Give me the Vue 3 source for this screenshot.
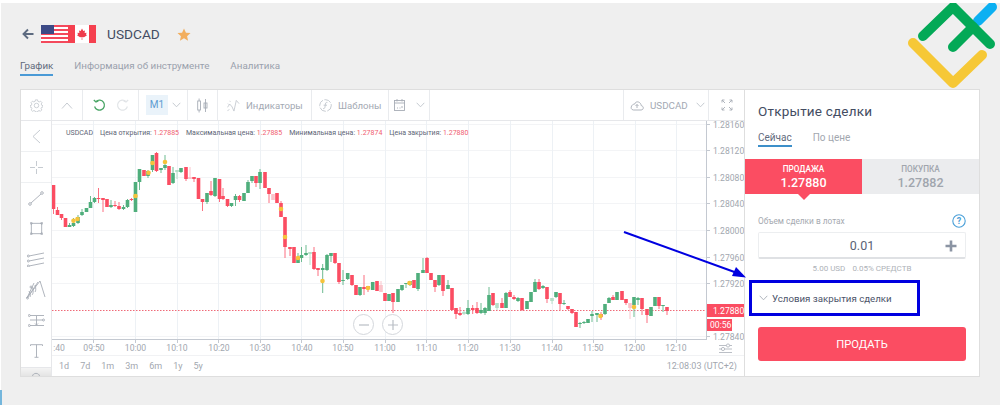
<template>
  <div class="page">
    <div class="edge-mark"></div>

    <div class="head">
      <svg class="back" width="12" height="12" viewBox="0 0 12 12">
        <path d="M11.5 6H1.5M6 1.5L1.5 6L6 10.5" fill="none" stroke="#5d6b80" stroke-width="1.9" />
      </svg>
      <svg class="flags" width="55" height="18" viewBox="0 0 55 18">
        <rect width="28" height="18" fill="#fff" />
        <rect v-for="i in 5" :key="i" y="0" :transform="`translate(0 ${(i - 1) * 4})`" width="28" height="2" fill="#f4495c" />
        <rect y="16" width="28" height="2" fill="#f4495c" />
        <rect width="13" height="9" fill="#3c4a86" />
        <rect x="27" width="7" height="18" fill="#f5404f" />
        <rect x="34" width="14" height="18" fill="#fff" />
        <rect x="48" width="7" height="18" fill="#f5404f" />
        <path d="M41 3.5L42.3 6L44 5.4L43.6 8L45.6 7.7L45 9.6L46 10.3L43 12.3L41.3 12L41.3 15H40.7L40.7 12L39 12.3L36 10.3L37 9.6L36.4 7.7L38.4 8L38 5.4L39.7 6Z" fill="#ee3c4c" />
      </svg>
      <span class="symbol">USDCAD</span>
      <svg class="star" width="14" height="13" viewBox="0 0 15 14">
        <path d="M7.5 0.5L9.6 5L14.5 5.5L10.8 8.8L11.9 13.6L7.5 11.1L3.1 13.6L4.2 8.8L0.5 5.5L5.4 5Z" fill="#f2ae5e" />
      </svg>
    </div>

    <div class="page-tabs">
      <span class="page-tab active">График</span>
      <span class="page-tab">Информация об инструменте</span>
      <span class="page-tab">Аналитика</span>
    </div>

    <div class="card">
      <div class="chart-side">
        <div class="toolbar">
          <div class="cell" style="width: 31px">
            <svg width="13" height="13" viewBox="0 0 15 15" class="ic">
              <circle cx="7.5" cy="7.5" r="2.6" />
              <path d="M6.3 1H8.7L9.1 2.7L10.7 3.4L12.2 2.5L13.9 4.2L12.9 5.7L13.6 7.3L15 7.7V9.2L13.4 9.6L12.8 11.1L13.6 12.6L12 14.2L10.5 13.3L9 14L8.6 15H6.4L6 13.9L4.5 13.3L3 14.2L1.3 12.6L2.2 11.1L1.5 9.6L0 9.2V7.7L1.5 7.3L2.2 5.7L1.2 4.2L2.9 2.5L4.4 3.4L5.9 2.7Z" />
            </svg>
          </div>
          <div class="cell" style="width: 31px">
            <svg width="12" height="7" viewBox="0 0 12 7" class="ic"><path d="M1 6.5L6 1L11 6.5" /></svg>
          </div>
          <div class="cell undo-cell" style="width: 56px">
            <svg width="13" height="13" viewBox="0 0 13 13" fill="none" stroke="#4aa566" stroke-width="1.3">
              <path d="M3 2.5A5 5 0 1 1 1.6 7.5" /><path d="M0.8 1L3 3L5.4 2" />
            </svg>
            <svg width="13" height="13" viewBox="0 0 13 13" fill="none" stroke="#e2e5e8" stroke-width="1.2">
              <path d="M10 2.5A5 5 0 1 0 11.4 7.5" /><path d="M12.2 1L10 3L7.6 2" />
            </svg>
          </div>
          <div class="cell m1-cell" style="width: 49px">
            <span class="m1">M1</span>
            <svg width="9" height="6" viewBox="0 0 9 6" class="ic"><path d="M0.7 0.8L4.5 4.8L8.3 0.8" /></svg>
          </div>
          <div class="cell" style="width: 30px">
            <svg width="11" height="15" viewBox="0 0 11 15" class="ic dark">
              <rect x="0.7" y="3" width="2.8" height="9" /><path d="M2.1 0.5V3M2.1 12V14.5M8.5 1V14" />
              <rect x="7" y="5" width="3" height="5" />
            </svg>
          </div>
          <div class="cell label-cell ind-cell" style="width: 94px">
            <svg width="13" height="13" viewBox="0 0 14 14" class="ic">
              <path d="M0.5 9L3 5.5L5.5 8.5L7.5 13L10 1.5L13 5" /><path d="M1 5L1.8 6M3 2L3.6 3M0.5 13L2.5 11" />
            </svg>
            <span>Индикаторы</span>
          </div>
          <div class="cell label-cell tpl-cell" style="width: 77px">
            <svg width="13" height="13" viewBox="0 0 13 13" class="ic">
              <circle cx="6.5" cy="6.5" r="5.8" stroke-dasharray="7 1.5" /><path d="M8.4 3.4C6.6 2.8 6.5 4.5 6.2 6.5C6 8.5 5.8 10 4.2 9.6M4.6 6.2H8" />
            </svg>
            <span>Шаблоны</span>
          </div>
          <div class="cell cal-cell" style="width: 41px">
            <svg width="11" height="12" viewBox="0 0 11 12" class="ic dark">
              <rect x="0.5" y="1.5" width="10" height="10" /><path d="M0.5 4H10.5M3 0V2.5M8 0V2.5M3 9H4M5.5 9H6.5M8 7V9" />
            </svg>
            <svg width="9" height="6" viewBox="0 0 9 6" class="ic"><path d="M0.7 0.8L4.5 4.8L8.3 0.8" /></svg>
          </div>
          <div class="tool-gap"></div>
          <div class="cell pair-cell" style="width: 85px">
            <svg width="14" height="11" viewBox="0 0 14 11" class="ic dark">
              <path d="M3.5 10H11C14 10 14 6 11.2 5.6C11 2 6 0 4.5 4.2C1.5 3.8 -0.8 9.5 3.5 10ZM7 8V4.5M5.5 6L7 4.5L8.5 6" />
            </svg>
            <span>USDCAD</span>
            <svg width="9" height="6" viewBox="0 0 9 6" class="ic pair-chev"><path d="M0.7 0.8L4.5 4.8L8.3 0.8" /></svg>
          </div>
          <div class="cell last" style="width: 35px">
            <svg width="12" height="12" viewBox="0 0 12 12" class="ic dark">
              <path d="M1 1L4 4M1 1H3.5M1 1V3.5M11 1L8 4M11 1H8.5M11 1V3.5M1 11L4 8M1 11H3.5M1 11V8.5M11 11L8 8M11 11H8.5M11 11V8.5" />
            </svg>
          </div>
        </div>

        <div class="chart-row">
          <div class="tools">
            <div class="tool sep">
              <svg width="9" height="15" viewBox="0 0 9 15" class="ic"><path d="M8 1L1 7.5L8 14" /></svg>
            </div>
            <div class="tool sep">
              <svg width="13" height="13" viewBox="0 0 13 13" class="ic"><path d="M6.5 0V5M6.5 8V13M0 6.5H5M8 6.5H13" /></svg>
            </div>
            <div class="tool">
              <svg width="16" height="15" viewBox="0 0 16 15" class="ic dark">
                <circle cx="2" cy="13" r="1.3" /><circle cx="14" cy="2" r="1.3" /><path d="M3 12L13 3" />
              </svg>
            </div>
            <div class="tool">
              <svg width="13" height="13" viewBox="0 0 13 13" class="ic dark">
                <rect x="1.3" y="1.3" width="10.4" height="10.4" />
                <circle cx="1.3" cy="1.3" r="1" /><circle cx="11.7" cy="1.3" r="1" /><circle cx="1.3" cy="11.7" r="1" /><circle cx="11.7" cy="11.7" r="1" />
              </svg>
            </div>
            <div class="tool">
              <svg width="18" height="15" viewBox="0 0 18 15" class="ic dark">
                <path d="M2 4L17 1M2 9L17 6M2 14L17 11" /><circle cx="1.3" cy="4" r="1" /><circle cx="1.3" cy="9" r="1" /><circle cx="1.3" cy="14" r="1" />
              </svg>
            </div>
            <div class="tool">
              <svg width="20" height="20" viewBox="0 0 20 20" class="ic dark">
                <path d="M1 18L14 1L19 17M1 18L8 3M1 18L12 2M3 11C4 14 5 15 4 17M6 7C8 11 7 14 6 15M9 5C10 8 10 11 9 12" />
                <circle cx="1.5" cy="18" r="1" /><circle cx="5" cy="7" r="1" />
              </svg>
            </div>
            <div class="tool">
              <svg width="17" height="13" viewBox="0 0 17 13" class="ic dark">
                <path d="M2 1.5H16M2 6H15M2 11.5H16M8.5 2V11M7 9.5L8.5 11L10 9.5" />
                <circle cx="1.3" cy="1.5" r="1" /><circle cx="15.5" cy="6" r="1" /><circle cx="1.3" cy="11.5" r="1" />
              </svg>
            </div>
            <div class="tool">
              <svg width="13" height="14" viewBox="0 0 13 14" class="ic dark"><path d="M0.5 2V0.7H12.5V2M6.5 0.7V13.3M4.5 13.3H8.5" /></svg>
            </div>
            <div class="tool-more">
              <svg width="8" height="4" viewBox="0 0 8 4" class="ic dark"><path d="M0.5 4C1 0.5 7 0.5 7.5 4" /></svg>
            </div>
          </div>

          <div class="chart-col">
            <div class="plot">
              <svg class="plot-svg" width="692" height="235" viewBox="52 121 692 235">
                <line v-for="y in gridY" :key="'h' + y" x1="52" x2="706" :y1="y" :y2="y" stroke="#f3f4f6" />
                <line v-for="x in gridX" :key="'v' + x" :x1="x" :x2="x" y1="121" y2="340" stroke="#edf1f5" />

                <line x1="52" x2="706" y1="310.5" y2="310.5" stroke="#ef6a78" stroke-dasharray="1.5 1.5" />

                <g v-for="(c, i) in candles" :key="i">
                  <line :x1="c[0]" :x2="c[0]" :y1="c[3]" :y2="c[4]" :stroke="wickColor(c[5])" />
                  <rect :x="c[0] - 1.8" :y="c[1]" width="3.6" :height="c[2] - c[1]" :fill="bodyColor(c[5])" />
                </g>
                <circle v-for="(d, i) in dots" :key="'d' + i" :cx="d[0]" :cy="d[1]" r="2.3" fill="#f5c33b" />

                <line x1="706.5" x2="706.5" y1="121" y2="340" stroke="#c4c9d1" />
                <line x1="52" x2="706" y1="339.5" y2="339.5" stroke="#c4c9d1" />
                <line v-for="y in gridY" :key="'t' + y" x1="707" x2="710" :y1="y" :y2="y" stroke="#c4c9d1" />
                <line v-for="x in gridX" :key="'b' + x" :x1="x" :x2="x" y1="340" y2="343" stroke="#c4c9d1" />

                <text v-for="p in prices" :key="p[0]" x="713" :y="p[1] + 3" class="axis">{{ p[0] }}</text>
                <text v-for="t in times" :key="t[0]" :x="t[1]" y="350.5" text-anchor="middle" class="axis">{{ t[0] }}</text>

                <rect x="707" y="304" width="37" height="13" fill="#fb4d62" />
                <text x="713" y="313.6" class="tag">1.27880</text>
                <rect x="707" y="319" width="25" height="12" fill="#fb4d62" />
                <text x="710" y="328.2" class="tag">00:56</text>

                <g fill="none" stroke="#a9afb8" stroke-width="0.8">
                  <path d="M719 345.5H732M719 349H732M719 352.5H732" />
                  <circle cx="728" cy="345.5" r="1.6" fill="#fff" /><circle cx="723" cy="349" r="1.6" fill="#fff" />
                </g>
              </svg>

              <div class="legend">
                <span>USDCAD</span>
                <span>Цена открытия: <b>1.27885</b></span>
                <span>Максимальная цена: <b>1.27885</b></span>
                <span>Минимальная цена: <b>1.27874</b></span>
                <span>Цена закрытия: <b>1.27880</b></span>
              </div>

              <div class="zoom-btns">
                <div class="zoom-btn"><svg width="10" height="10" viewBox="0 0 10 10"><path d="M0 5H10" stroke="#b9bec5" stroke-width="1.2" /></svg></div>
                <div class="zoom-btn"><svg width="10" height="10" viewBox="0 0 10 10"><path d="M0 5H10M5 0V10" stroke="#b9bec5" stroke-width="1.2" /></svg></div>
              </div>
            </div>

            <div class="ranges">
              <span v-for="r in ranges" :key="r">{{ r }}</span>
              <span class="clock">12:08:03 (UTC+2)</span>
            </div>
          </div>
        </div>
      </div>

      <div class="panel">
        <div class="panel-title">Открытие сделки</div>
        <div class="panel-tabs">
          <span class="panel-tab active">Сейчас</span>
          <span class="panel-tab">По цене</span>
        </div>

        <div class="quotes">
          <div class="quote sell">
            <div class="q-label">ПРОДАЖА</div>
            <div class="q-value">1.27880</div>
          </div>
          <div class="quote buy">
            <div class="q-label">ПОКУПКА</div>
            <div class="q-value">1.27882</div>
          </div>
        </div>

        <div class="lot-row">
          <span>Объем сделки в лотах</span>
          <svg width="14" height="14" viewBox="0 0 14 14">
            <circle cx="7" cy="7" r="6.2" fill="none" stroke="#4a9fd8" stroke-width="1.1" />
            <text x="7" y="10.2" text-anchor="middle" class="help">?</text>
          </svg>
        </div>
        <div class="lot-input">
          <span>0.01</span>
          <svg class="plus" width="12" height="12" viewBox="0 0 12 12">
            <path d="M6 0.5V11.5M0.5 6H11.5" stroke="#8b94a3" stroke-width="2.6" />
          </svg>
        </div>
        <div class="lot-info"><span>5.00 USD</span><span>0.05% СРЕДСТВ</span></div>

        <div class="close-terms">
          <svg width="9" height="6" viewBox="0 0 9 6" class="ic dark"><path d="M0.7 0.8L4.5 4.8L8.3 0.8" /></svg>
          <span>Условия закрытия сделки</span>
        </div>

        <button class="sell-btn">ПРОДАТЬ</button>
      </div>
    </div>

    <svg class="arrow" width="140" height="60" viewBox="0 0 140 60">
      <line x1="2" y1="3" x2="118" y2="45" stroke="#0000e0" stroke-width="2" />
      <path d="M124 48.5L110 47L114 38Z" fill="#0000e0" />
    </svg>

    <svg class="logo" width="92" height="92" viewBox="0 0 92 92" fill="none" stroke-linecap="round" stroke-linejoin="round" stroke-width="10">
      <path d="M71 18L85 4" stroke="#0cb0f2" />
      <path d="M16 33L46 4L83 41" stroke="#03a957" />
      <path d="M46 44L66 24" stroke="#03a957" />
      <path d="M6 40L46 80L75 52" stroke="#f6c836" />
    </svg>
  </div>
</template>

<script setup>
const gridY = [124.5, 150.5, 177.5, 203.5, 230.5, 257.5, 283.5, 336.5]
const gridX = [93.5, 135.5, 177.5, 218.5, 260.5, 301.5, 343.5, 385.5, 426.5, 468.5, 510.5, 552.5, 593.5, 635.5, 676.5]

const prices = [
  ['1.28160', 124.5],
  ['1.28120', 150.5],
  ['1.28080', 177.5],
  ['1.28040', 203.5],
  ['1.28000', 230.5],
  ['1.27960', 257.5],
  ['1.27920', 283.5],
  ['1.27840', 336.5],
]

const times = [
  [':40', 59], ['09:50', 94], ['10:00', 135.5], ['10:10', 177], ['10:20', 219], ['10:30', 260],
  ['10:40', 302], ['10:50', 343], ['11:00', 385], ['11:10', 426.5], ['11:20', 468], ['11:30', 510],
  ['11:40', 552], ['11:50', 593], ['12:00', 634.5], ['12:10', 676],
]

const ranges = ['1d', '7d', '1m', '3m', '6m', '1y', '5y']

// x, body top, body bottom, wick top, wick bottom, colour
const candles = [
  [53.5, 185, 209, 185, 214, 'r'], [57.5, 210, 215, 207, 215, 'r'], [61.5, 214, 218, 214, 220, 'r'],
  [65.5, 218, 227, 218, 227, 'r'], [69.5, 225, 227, 223, 227, 'g'], [73.5, 223, 226, 218, 227, 'g'],
  [78, 217, 223, 215, 224, 'g'], [82, 212, 215, 209, 216, 'g'], [86.5, 208, 212, 208, 212, 'g'],
  [90.5, 202, 208, 196, 208, 'g'], [94.5, 198, 202, 197, 203, 'g'], [98.5, 198, 199, 188, 203, 'r'],
  [103, 198, 200, 198, 212, 'r'], [107, 199, 207, 199, 207, 'r'], [111, 205, 207, 200, 208, 'g'],
  [115, 205, 206, 201, 207, 'r'], [119, 206, 209, 202, 210, 'r'], [123.5, 207, 209, 205, 210, 'g'],
  [127.5, 200, 207, 199, 208, 'g'], [131.5, 199, 200, 198, 201, 'r'], [135.5, 182, 212, 182, 211, 'g'],
  [139.5, 169, 182, 169, 190, 'g'], [144, 170, 176, 170, 176, 'r'], [148, 171, 176, 170, 178, 'g'],
  [152.5, 155, 170, 155, 172, 'g'], [156.5, 153, 171, 152, 172, 'r'], [161, 168, 170, 168, 173, 'g'],
  [165, 165, 168, 155, 170, 'g'], [169, 166, 185, 166, 185, 'r'], [173, 173, 183, 167, 184, 'g'],
  [177, 170, 172, 170, 179, 'pg'], [181, 168, 172, 168, 173, 'g'], [186, 167, 179, 167, 181, 'r'],
  [190, 177, 179, 167, 179, 'pr'], [194, 177, 179, 177, 182, 'r'], [198.5, 178, 199, 178, 199, 'r'],
  [202.5, 199, 202, 199, 211, 'r'], [207, 193, 202, 193, 204, 'g'], [211, 191, 195, 181, 196, 'r'],
  [215, 178, 196, 178, 197, 'g'], [219.5, 179, 199, 179, 202, 'r'], [223, 196, 199, 188, 200, 'r'],
  [227.5, 199, 206, 199, 207, 'r'], [231.5, 203, 206, 203, 207, 'g'], [235.5, 196, 200, 194, 206, 'g'],
  [239.5, 196, 200, 195, 202, 'r'], [244, 193, 201, 193, 201, 'g'], [248, 182, 193, 180, 193, 'g'],
  [252, 176, 181, 176, 183, 'g'], [256, 176, 183, 176, 187, 'r'], [260, 172, 183, 169, 189, 'g'],
  [265, 172, 188, 172, 188, 'r'], [269, 188, 194, 188, 203, 'r'], [273, 194, 200, 194, 200, 'pr'],
  [277, 193, 203, 193, 203, 'r'], [281, 203, 217, 201, 217, 'r'], [285, 217, 247, 217, 258, 'r'],
  [290, 247, 249, 247, 256, 'r'], [294, 247, 263, 247, 263, 'r'], [298, 257, 263, 253, 263, 'g'],
  [301.5, 255, 258, 247, 262, 'g'], [306, 253, 255, 245, 256, 'g'], [310, 252, 254, 252, 265, 'pg'],
  [314, 252, 269, 247, 270, 'r'], [318, 268, 270, 268, 276, 'r'], [322.7, 268, 270, 264, 293, 'g'],
  [327, 255, 270, 254, 271, 'g'], [331, 253, 256, 253, 262, 'g'], [335, 253, 263, 253, 264, 'r'],
  [339, 263, 282, 263, 284, 'r'], [343, 280, 281, 270, 285, 'g'], [347.7, 273, 279, 273, 280, 'g'],
  [352, 275, 285, 275, 286, 'r'], [356, 285, 295, 285, 295, 'r'], [360, 287, 295, 287, 296, 'g'],
  [364, 287, 289, 275, 295, 'r'], [368, 286, 289, 286, 292, 'r'], [372.7, 282, 290, 282, 290, 'g'],
  [377, 281, 291, 281, 291, 'r'], [381, 285, 292, 281, 292, 'pr'], [385, 293, 301, 293, 301, 'r'],
  [389, 294, 301, 294, 301, 'g'], [393, 293, 302, 293, 313, 'r'], [398, 289, 302, 289, 302, 'g'],
  [402, 285, 290, 285, 291, 'g'], [406, 283, 284, 283, 288, 'g'], [410, 281, 285, 281, 286, 'g'],
  [414, 280, 288, 280, 288, 'r'], [418, 273, 289, 273, 291, 'g'], [423, 270, 273, 258, 273, 'g'],
  [427, 258, 273, 257, 273, 'r'], [431, 273, 280, 273, 280, 'r'], [435, 280, 287, 280, 292, 'r'],
  [439, 275, 285, 275, 286, 'g'], [443, 275, 291, 275, 296, 'r'], [448, 285, 289, 280, 289, 'g'],
  [452, 288, 310, 288, 310, 'r'], [456, 308, 314, 308, 319, 'r'], [460, 313, 315, 307, 316, 'r'],
  [464, 312, 314, 311, 315, 'pg'], [468, 308, 314, 300, 315, 'g'], [472.7, 308, 310, 305, 314, 'r'],
  [477, 308, 313, 302, 314, 'r'], [481, 310, 313, 303, 314, 'g'], [485, 308, 313, 307, 315, 'g'],
  [489, 295, 311, 287, 311, 'g'], [493, 293, 305, 293, 306, 'r'], [497, 303, 308, 303, 310, 'pg'],
  [502, 303, 308, 298, 308, 'r'], [506, 293, 308, 292, 308, 'g'], [510, 292, 297, 290, 297, 'r'],
  [514, 297, 299, 295, 300, 'r'], [518, 298, 301, 297, 302, 'g'], [522, 298, 310, 298, 311, 'r'],
  [527, 301, 309, 301, 309, 'g'], [531, 292, 302, 292, 302, 'g'], [535, 282, 292, 279, 292, 'g'],
  [539, 282, 289, 279, 290, 'r'], [543, 286, 288, 285, 289, 'g'], [547, 287, 299, 287, 303, 'r'],
  [552, 298, 301, 298, 304, 'pg'], [556, 292, 297, 292, 298, 'g'], [560, 293, 304, 293, 310, 'r'],
  [564, 303, 304, 300, 305, 'g'], [568, 306, 309, 306, 310, 'r'], [572, 309, 313, 309, 314, 'r'],
  [576, 312, 327, 312, 327, 'r'], [580, 323, 324, 322, 328, 'g'], [584, 322, 323, 321, 324, 'g'],
  [588, 319, 323, 319, 323, 'g'], [592, 314, 316, 311, 322, 'g'], [597, 313, 315, 313, 322, 'g'],
  [601, 314, 317, 312, 320, 'r'], [605, 304, 314, 304, 315, 'g'], [609, 298, 303, 297, 303, 'g'],
  [613, 297, 300, 295, 300, 'r'], [617, 292, 300, 292, 300, 'g'], [622, 291, 300, 291, 300, 'r'],
  [626, 299, 303, 299, 305, 'r'], [630, 303, 308, 303, 319, 'pr'], [634, 297, 305, 297, 317, 'g'],
  [638, 298, 300, 297, 305, 'g'], [642, 298, 309, 298, 315, 'r'], [647, 309, 315, 309, 323, 'r'],
  [651, 307, 316, 307, 316, 'g'], [655, 297, 306, 297, 306, 'g'], [659, 297, 306, 297, 309, 'r'],
  [663, 305, 306, 305, 312, 'g'], [667, 307, 311, 307, 315, 'r'],
]

const dots = [
  [73.5, 220.7], [77.5, 219], [135.5, 196], [148.5, 172.7], [152.5, 163], [165, 162],
  [281, 209], [285, 237], [298, 258], [322.5, 281], [368, 288], [409.5, 283], [600.5, 316], [634, 307],
]

const bodyColor = (c) => {
  if (c == 'r') return '#fb4d62'
  if (c == 'g') return '#4fae7c'
  if (c == 'pr') return '#fbc4cb'
  return '#b6dfc8'
}
const wickColor = (c) => {
  if (c == 'r') return '#fb6f80'
  if (c == 'g') return '#6dbb91'
  if (c == 'pr') return '#fbc4cb'
  return '#b6dfc8'
}
</script>

<style scoped>
.page {
  position: relative;
  width: 999px;
  height: 402px;
  margin: 3px 0 0 1px;
  padding: 22px 19px 0;
  box-sizing: border-box;
  background: #efefef;
  font-family: Roboto, "Liberation Sans", sans-serif;
}
.edge-mark {
  position: absolute;
  left: -1px;
  top: 387px;
  width: 2px;
  height: 15px;
  background: #74b6dc;
}
.head {
  display: flex;
  align-items: center;
  height: 18px;
}
.back {
  margin-left: 2px;
}
.flags {
  margin-left: 7px;
}
.symbol {
  margin-left: 11px;
  font-size: 13.7px;
  color: #434c62;
}
.star {
  margin-left: 17px;
}
.page-tabs {
  display: flex;
  gap: 21px;
  margin-top: 14px;
  height: 19px;
}
.page-tab {
  font-size: 9.8px;
  line-height: 17px;
  color: #9aa1ad;
}
.page-tab.active {
  color: #5f6a7c;
  border-bottom: 2px solid #4a9ad6;
  height: 17px;
}
.card {
  display: flex;
  width: 960px;
  height: 288px;
  margin-top: 13px;
  box-sizing: border-box;
  background: #fff;
  border: 1px solid #dedede;
}
.chart-side {
  display: flex;
  flex-direction: column;
  width: 724px;
  border-right: 1px solid #dedede;
  box-sizing: border-box;
}
.toolbar {
  display: flex;
  height: 31px;
  box-sizing: border-box;
  border-bottom: 1px solid #e6e7ea;
}
.cell {
  display: flex;
  align-items: center;
  justify-content: center;
  box-sizing: border-box;
  border-right: 1px solid #e9ebee;
  font-size: 10px;
  color: #a3a9b3;
}
.cell.last {
  border-right: 0;
}
.tool-gap {
  flex: 1;
  border-right: 1px solid #e9ebee;
}
.ic {
  fill: none;
  stroke: #c0c5cc;
  stroke-width: 0.9;
}
.ic.dark {
  stroke: #a7adb6;
}
.undo-cell {
  gap: 10px;
}
.m1-cell {
  gap: 4px;
  justify-content: flex-start;
  padding-left: 7px;
}
.m1 {
  width: 22px;
  height: 20px;
  line-height: 20px;
  text-align: center;
  background: #eaf3fa;
  color: #5c9bd1;
  font-size: 10px;
}
.label-cell {
  justify-content: flex-start;
  font-size: 9.6px;
}
.ind-cell {
  gap: 6px;
  padding-left: 9px;
}
.tpl-cell {
  gap: 6px;
  padding-left: 7px;
}
.cal-cell {
  gap: 11px;
}
.pair-cell {
  justify-content: flex-start;
  gap: 6px;
  padding-left: 6px;
  font-size: 9.8px;
}
.pair-chev {
  margin-left: 2px;
}
.chart-row {
  display: flex;
  flex: 1;
}
.tools {
  display: flex;
  flex-direction: column;
  width: 31px;
  box-sizing: border-box;
  border-right: 1px solid #e6e7ea;
}
.tool {
  display: flex;
  align-items: center;
  justify-content: center;
  height: 30.5px;
  flex: none;
}
.tool.sep {
  border-bottom: 1px solid #eef0f2;
  box-sizing: border-box;
  height: 31px;
}
.tool-more {
  flex: 1;
  margin-top: 1px;
  display: flex;
  justify-content: center;
  align-items: flex-end;
  background: linear-gradient(#f4f4f4, #e4e4e4);
  border-top: 1px solid #e6e7ea;
}
.chart-col {
  display: flex;
  flex-direction: column;
  flex: 1;
}
.plot {
  position: relative;
  height: 235px;
  border-bottom: 1px solid #f1f2f4;
  box-sizing: border-box;
}
.plot-svg {
  display: block;
}
.axis {
  font-family: Roboto, "Liberation Sans", sans-serif;
  font-size: 8.6px;
  fill: #a2a7af;
}
.tag {
  font-family: Roboto, "Liberation Sans", sans-serif;
  font-size: 8.6px;
  fill: #fff;
}
.legend {
  position: absolute;
  left: 14px;
  top: 8px;
  display: flex;
  gap: 7px;
  font-size: 7px;
  line-height: 9px;
  color: #5d6575;
  white-space: nowrap;
}
.legend b {
  font-weight: 400;
  color: #f0606f;
}
.zoom-btns {
  position: absolute;
  left: 301px;
  top: 193px;
  display: flex;
  gap: 8px;
}
.zoom-btn {
  display: flex;
  align-items: center;
  justify-content: center;
  width: 21px;
  height: 21px;
  box-sizing: border-box;
  border: 1px solid #d4d7dc;
  border-radius: 50%;
  background: #fff;
}
.ranges {
  display: flex;
  align-items: center;
  flex: 1;
  padding: 0 7px;
  gap: 11px;
  font-size: 9px;
  color: #a2a7af;
}
.clock {
  margin-left: auto;
}
.panel {
  display: flex;
  flex-direction: column;
  flex: 1;
}
.panel-title {
  margin: 11px 13px 0;
  font-size: 13.5px;
  line-height: 20px;
  letter-spacing: 0.2px;
  color: #434c62;
}
.panel-tabs {
  display: flex;
  gap: 21px;
  margin: 9px 13px 0;
  height: 17px;
}
.panel-tab {
  font-size: 10px;
  line-height: 15px;
  color: #a2a7af;
}
.panel-tab.active {
  color: #5f6a7c;
  border-bottom: 2px solid #3d8fc9;
  height: 15px;
}
.quotes {
  display: flex;
  height: 35px;
  margin-top: 12px;
}
.quote {
  position: relative;
  flex: 1;
  text-align: center;
}
.q-label {
  padding-top: 5px;
  font-size: 8.2px;
  font-weight: 500;
  line-height: 11px;
}
.q-value {
  font-size: 12.5px;
  font-weight: 500;
  line-height: 16px;
}
.sell {
  background: #fb4d62;
  color: #fff;
}
.sell::after {
  content: "";
  position: absolute;
  left: 50%;
  bottom: -6px;
  margin-left: -6px;
  border-style: solid;
  border-width: 6px 6px 0;
  border-color: #fb4d62 transparent transparent;
}
.buy {
  background: #ebecee;
  color: #a0a5ad;
}
.lot-row {
  display: flex;
  align-items: center;
  justify-content: space-between;
  height: 14px;
  margin: 20px 13px 0;
  font-size: 8.3px;
  color: #a5a9b0;
}
.lot-input {
  position: relative;
  display: flex;
  align-items: center;
  justify-content: center;
  height: 27px;
  margin: 4px 13px 0;
  box-sizing: border-box;
  border: 1px solid #eceef0;
  border-bottom: 2px solid #dfe1e4;
  border-radius: 2px;
  font-size: 12.5px;
  color: #5a6375;
}
.plus {
  position: absolute;
  right: 8px;
  top: 7px;
}
.help {
  font-family: Roboto, "Liberation Sans", sans-serif;
  font-size: 9px;
  font-weight: 700;
  fill: #4a9fd8;
}
.lot-info {
  display: flex;
  justify-content: center;
  gap: 7px;
  height: 12px;
  margin-top: 4px;
  font-size: 8px;
  line-height: 12px;
  color: #aeb2b8;
}
.close-terms {
  display: flex;
  align-items: center;
  gap: 4px;
  width: 171px;
  height: 36px;
  margin: 5px 0 0 4px;
  padding-left: 7px;
  box-sizing: border-box;
  border: 3px solid #0000e0;
  font-size: 9.7px;
  color: #4a5268;
}
.sell-btn {
  height: 34px;
  margin: 11px 13px 0;
  padding: 0;
  border: 0;
  border-radius: 3px;
  background: #fb4d62;
  color: #fff;
  font-family: Roboto, "Liberation Sans", sans-serif;
  font-size: 11.2px;
}
.arrow {
  position: absolute;
  left: 621px;
  top: 226px;
}
.logo {
  position: absolute;
  left: 906px;
  top: 0;
}
</style>

<style>
html, body {
  margin: 0;
  background: #fff;
}
</style>
